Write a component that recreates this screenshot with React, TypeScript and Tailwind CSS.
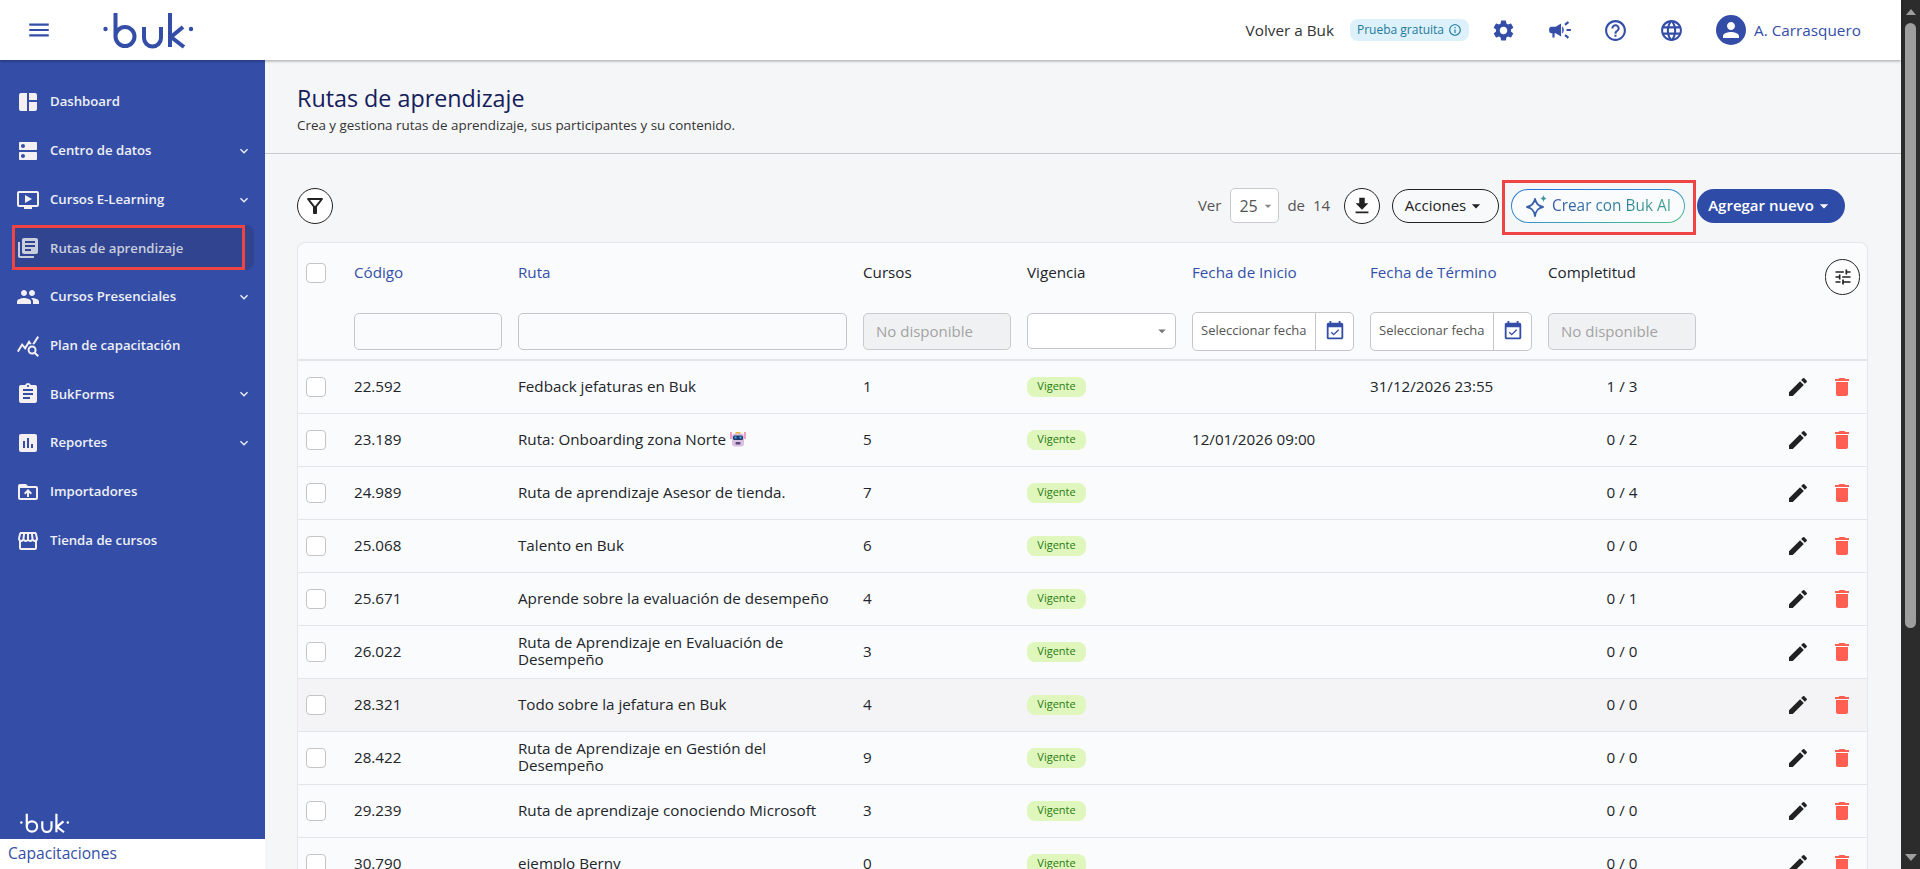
// App.tsx
import {
  MdArrowDropDown,
  MdAssessment,
  MdAssignment,
  MdCampaign,
  MdDelete,
  MdDns,
  MdEdit,
  MdEventAvailable,
  MdFileDownload,
  MdHelpOutline,
  MdInfoOutline,
  MdKeyboardArrowDown,
  MdLanguage,
  MdLibraryBooks,
  MdMenu,
  MdOndemandVideo,
  MdOutlineFilterAlt,
  MdPeople,
  MdPerson,
  MdQueryStats,
  MdSettings,
  MdSpaceDashboard,
  MdStorefront,
  MdTune,
  MdDriveFolderUpload,
} from 'react-icons/md';

const NAV = [
  { label: 'Dashboard', icon: MdSpaceDashboard },
  { label: 'Centro de datos', icon: MdDns, arrow: true },
  { label: 'Cursos E-Learning', icon: MdOndemandVideo, arrow: true },
  { label: 'Rutas de aprendizaje', icon: MdLibraryBooks, active: true },
  { label: 'Cursos Presenciales', icon: MdPeople, arrow: true },
  { label: 'Plan de capacitación', icon: MdQueryStats },
  { label: 'BukForms', icon: MdAssignment, arrow: true },
  { label: 'Reportes', icon: MdAssessment, arrow: true },
  { label: 'Importadores', icon: MdDriveFolderUpload },
  { label: 'Tienda de cursos', icon: MdStorefront },
];

const ROWS = [
  { code: '22.592', name: 'Fedback jefaturas en Buk', courses: '1', end: '31/12/2026 23:55', done: '1 / 3' },
  { code: '23.189', name: 'Ruta: Onboarding zona Norte', robot: true, courses: '5', start: '12/01/2026 09:00', done: '0 / 2' },
  { code: '24.989', name: 'Ruta de aprendizaje Asesor de tienda.', courses: '7', done: '0 / 4' },
  { code: '25.068', name: 'Talento en Buk', courses: '6', done: '0 / 0' },
  { code: '25.671', name: 'Aprende sobre la evaluación de desempeño', courses: '4', done: '0 / 1' },
  { code: '26.022', name: 'Ruta de Aprendizaje en Evaluación de Desempeño', courses: '3', done: '0 / 0' },
  { code: '28.321', name: 'Todo sobre la jefatura en Buk', courses: '4', done: '0 / 0', hover: true },
  { code: '28.422', name: 'Ruta de Aprendizaje en Gestión del Desempeño', courses: '9', done: '0 / 0' },
  { code: '29.239', name: 'Ruta de aprendizaje conociendo Microsoft', courses: '3', done: '0 / 0' },
  { code: '30.790', name: 'ejemplo Berny', courses: '0', done: '0 / 0' },
];

function BukLogo({ className }: { className: string }) {
  return (
    <svg viewBox="0 0 92 40" fill="none" stroke="currentColor" strokeWidth="4" className={className}>
      <circle cx="2.500" cy="19" r="2.200" fill="currentColor" stroke="none" />
      <path d="M12.500 3V26.500a9.500 9.500 0 1 0 9.500-9.500 9.500 9.500 0 0 0-9.500 9.500" />
      <path d="M41 17v11a8.500 8.500 0 0 0 17 0V17" />
      <path d="M67 3V37M80 17L68 27L81 37" />
      <circle cx="88" cy="19" r="2.200" fill="currentColor" stroke="none" />
    </svg>
  );
}

function Robot() {
  return (
    <svg viewBox="0 0 16 16" className="inline-block w-[16px] h-[16px] ml-1 align-[-2px]">
      <path d="M1 1v7M15 1v7" stroke="#e0457b" strokeWidth="1" />
      <rect x="5.500" y="1" width="5" height="2" fill="#f0b93a" />
      <rect x="2" y="2.500" width="12" height="13" rx="3" fill="#d9bfe0" />
      <rect x="3" y="4.500" width="10" height="4.500" rx="1.500" fill="#1e3a6e" />
      <rect x="4.500" y="5.500" width="2" height="2" fill="#4aa8e8" />
      <rect x="9.500" y="5.500" width="2" height="2" fill="#4aa8e8" />
      <rect x="5.500" y="11" width="5" height="2.500" rx="1" fill="#5a4a78" />
    </svg>
  );
}

function Sparkle() {
  return (
    <svg viewBox="0 0 24 24" className="w-[24px] h-[24px] shrink-0">
      <path
        d="M10 5c.9 4.500 2.800 6.800 8 8-5.200 1.200-7.100 3.500-8 9-.9-5.500-2.800-7.800-8-9 5.200-1.200 7.100-3.500 8-8z"
        fill="none"
        stroke="#3560a8"
        strokeWidth="1.800"
        strokeLinejoin="round"
      />
      <path d="M18.500 1c.3 2 1.200 3 3.200 3.600-2 .6-2.900 1.600-3.200 3.600-.3-2-1.200-3-3.200-3.600 2-.6 2.900-1.600 3.200-3.600z" fill="#3f93a0" />
    </svg>
  );
}

function Checkbox() {
  return <span className="block w-[20px] h-[20px] rounded-[4px] border border-[#c4c4c4] bg-white ml-2" />;
}

function DateFilter() {
  return (
    <div className="flex h-[39px] rounded-[5px] border border-[#c4c6ca] bg-white overflow-hidden">
      <input
        readOnly
        placeholder="Seleccionar fecha"
        className="w-[122px] min-w-0 pl-2 pr-2 text-[13px] outline-none placeholder:text-[#555]"
      />
      <span className="flex-1 flex items-center justify-center border-l border-[#c4c6ca]">
        <MdEventAvailable size={22} className="text-[#344ea8]" />
      </span>
    </div>
  );
}

function Disabled() {
  return (
    <input
      disabled
      placeholder="No disponible"
      className="w-full h-[37px] px-3 rounded-[5px] border border-[#c9cacd] bg-[#f0f1f3] text-[15px] placeholder:text-[#a3a3a3]"
    />
  );
}

export default function App() {
  return (
    <div className="flex w-full h-[869px] overflow-hidden text-[#212529] font-['Open_Sans','Lato',sans-serif]">
      <div className="flex flex-col w-[1901px] shrink-0 min-w-0">
        <header className="relative z-10 flex items-center h-[60px] shrink-0 bg-white shadow-[0_1px_3px_rgba(0,0,0,0.35)]">
          <MdMenu size={26} className="ml-[26px] text-[#344ea8]" />
          <BukLogo className="ml-[51px] w-[92px] h-[40px] text-[#344ea8]" />
          <div className="ml-auto flex items-center pr-[41px]">
            <span className="text-[15.300px] text-[#333]">Volver a Buk</span>
            <span className="ml-4 flex items-center justify-center gap-1 w-[119px] h-[22px] rounded-[8px] bg-[#dcf1f9] text-[12px] text-[#1f7a9c]">
              Prueba gratuita
              <MdInfoOutline size={14} />
            </span>
            <MdSettings size={25} className="ml-[22px] text-[#344ea8]" />
            <MdCampaign size={26} className="ml-[31px] text-[#344ea8]" />
            <MdHelpOutline size={25} className="ml-[30px] text-[#344ea8]" />
            <MdLanguage size={25} className="ml-[31px] text-[#344ea8]" />
            <span className="ml-[32px] flex items-center justify-center w-[30px] h-[30px] rounded-full bg-[#344ea8]">
              <MdPerson size={24} className="text-white" />
            </span>
            <span className="ml-2 w-[106px] text-[15.300px] whitespace-nowrap text-[#344ea8]">A. Carrasquero</span>
          </div>
        </header>

        <div className="flex flex-1 min-h-0">
          <aside className="flex flex-col w-[265px] shrink-0">
            <div className="flex flex-col flex-1 bg-[#344ea8] pt-[18px]">
              <nav className="flex flex-col">
                {NAV.map((item) => {
                  const Icon = item.icon;
                  return (
                    <div key={item.label} className="relative mx-[12px] h-[48.7px] flex items-center">
                      {item.active && (
                        <>
                          <span className="absolute left-0 right-[-1px] top-[1px] h-[45px] rounded-[8px] bg-[#30448f]" />
                          <span className="absolute left-0 top-[1px] w-[233px] h-[45px] border-[3px] border-[#ef4444]" />
                        </>
                      )}
                      <Icon size={24} className={`relative ml-[4px] shrink-0 ${item.active ? 'text-[#c9cede]' : 'text-[#f3eff2]'}`} />
                      <span
                        className={`relative ml-[10px] text-[13.200px] font-semibold ${
                          item.active ? 'text-[#c9cede]' : 'text-[#eef0f6]'
                        }`}
                      >
                        {item.label}
                      </span>
                      {item.arrow && <MdKeyboardArrowDown size={16} className="ml-auto mr-[1px] text-[#eef0f6]" />}
                    </div>
                  );
                })}
              </nav>
              <BukLogo className="mt-auto mb-[5px] ml-[20px] w-[50px] h-[22px] text-white" />
            </div>
            <div className="h-[30px] shrink-0 bg-white pl-2 flex items-center text-[15.600px] text-[#344ea8]">
              Capacitaciones
            </div>
          </aside>

          <main className="flex-1 min-w-0 bg-[#f5f6f8]">
            <div className="h-[94px] border-b border-[#c9cbcf] pl-[32px] pt-[23px]">
              <h1 className="text-[23.300px] leading-[30px] font-medium text-[#14205a]">Rutas de aprendizaje</h1>
              <p className="mt-[3px] text-[13.400px] leading-[18px] text-[#333]">
                Crea y gestiona rutas de aprendizaje, sus participantes y su contenido.
              </p>
            </div>

            <div className="flex items-center h-[35px] mt-[34px] pl-[32px] pr-[56px]">
              <button className="flex items-center justify-center w-[36px] h-[36px] rounded-full border border-[#222] bg-white">
                <MdOutlineFilterAlt size={24} className="text-[#222]" />
              </button>
              <span className="ml-auto text-[15px] text-[#555]">Ver</span>
              <span className="ml-[9px] flex items-center justify-between w-[49px] h-[35px] pl-2 pr-[2px] rounded-[5px] border border-[#c9cacd] bg-white text-[16px] text-[#555]">
                25
                <MdArrowDropDown size={16} className="text-[#888]" />
              </span>
              <span className="ml-[8px] text-[15px] text-[#555]">de</span>
              <span className="ml-[8px] w-[20px] text-[15px] text-[#555]">14</span>
              <button className="ml-[11px] flex items-center justify-center w-[36px] h-[36px] rounded-full border border-[#222] bg-white">
                <MdFileDownload size={22} className="text-[#222]" />
              </button>
              <button className="ml-[12px] flex items-center justify-center w-[107px] h-[34px] rounded-full border border-[#222] bg-[#f8f9fb] text-[15px] text-[#222]">
                Acciones
                <MdArrowDropDown size={20} />
              </button>
              <div className="relative ml-[12px]">
                <span className="absolute left-[-9px] right-[-11px] top-[-9px] bottom-[-12px] border-[3px] border-[#ef4444]" />
                <div className="relative w-[174px] h-[34px] rounded-full p-px bg-gradient-to-br from-[#1f6fe0] via-[#3a8fd0] to-[#4cc07f]">
                  <div className="flex items-center justify-center gap-[3px] w-full h-full rounded-full bg-[#fafbfd] text-[15.400px]">
                    <Sparkle />
                    <span className="bg-gradient-to-r from-[#3156a8] to-[#3fa28c] bg-clip-text text-transparent whitespace-nowrap">
                      Crear con Buk AI
                    </span>
                  </div>
                </div>
              </div>
              <button className="ml-[12px] flex items-center justify-center w-[148px] h-[34px] rounded-full bg-[#2f4ba8] text-[15px] font-semibold text-white whitespace-nowrap">
                Agregar nuevo
                <MdArrowDropDown size={20} />
              </button>
            </div>

            <div className="mt-[19px] ml-[32px] mr-[33px] rounded-t-[8px] border border-b-0 border-[#e6e7ea] bg-[#fafbfd]">
              <div className="grid grid-cols-[40px_148px_329px_148px_149px_162px_162px_148px_1fr] gap-x-4 grid-rows-[60px_56px] items-center border-b-2 border-[#e4e5e8] text-[15.200px]">
                <Checkbox />
                <span className="pb-[2px] text-[#3450a8]">Código</span>
                <span className="pb-[2px] text-[#3450a8]">Ruta</span>
                <span className="pb-[2px] font-medium">Cursos</span>
                <span className="pb-[2px] font-medium">Vigencia</span>
                <span className="pb-[2px] text-[#3450a8]">Fecha de Inicio</span>
                <span className="pb-[2px] text-[#3450a8]">Fecha de Término</span>
                <span className="pb-[2px] font-medium">Completitud</span>
                <span className="flex justify-end pr-[7px] pt-2">
                  <button className="flex items-center justify-center w-[35px] h-[36px] rounded-full border border-[#222] bg-white">
                    <MdTune size={20} className="text-[#222]" />
                  </button>
                </span>

                <span />
                <input className="w-full h-[37px] rounded-[5px] border border-[#c4c6ca] bg-[#fafbfd]" />
                <input className="w-full h-[37px] rounded-[5px] border border-[#c4c6ca] bg-[#fafbfd]" />
                <Disabled />
                <span className="relative flex items-center justify-end w-full h-[36px] pr-1 rounded-[5px] border border-[#c4c6ca] bg-white">
                  <MdArrowDropDown size={18} className="text-[#777]" />
                </span>
                <DateFilter />
                <DateFilter />
                <Disabled />
                <span />
              </div>

              {ROWS.map((row) => (
                <div
                  key={row.code}
                  className={`grid grid-cols-[40px_148px_329px_148px_149px_162px_162px_148px_1fr] gap-x-4 items-center h-[53px] border-b-[1px] border-[#e4e5e8] text-[15.200px] ${
                    row.hover ? 'bg-[#f4f4f6]' : ''
                  }`}
                >
                  <Checkbox />
                  <span className="pb-[2px]">{row.code}</span>
                  <span className="pb-[2px] leading-[17px]">
                    {row.name}
                    {row.robot && <Robot />}
                  </span>
                  <span className="pb-[2px]">{row.courses}</span>
                  <span>
                    <span className="flex items-center justify-center w-[59px] h-[20px] mb-[1px] rounded-[8px] bg-[#dff7bd] text-[11px] text-[#2a7a10]">
                      Vigente
                    </span>
                  </span>
                  <span className="pb-[2px]">{row.start}</span>
                  <span className="pb-[2px]">{row.end}</span>
                  <span className="pb-[2px] text-center">{row.done}</span>
                  <span className="flex justify-end items-center gap-[20px] pr-[13px]">
                    <MdEdit size={24} className="text-[#222]" />
                    <MdDelete size={24} className="text-[#ff5f52]" />
                  </span>
                </div>
              ))}
            </div>
          </main>
        </div>
      </div>

      {/* scrollbar of the captured window */}
      <div className="relative w-[19px] shrink-0 bg-[#2c2c2c]">
        <span className="absolute left-[5px] top-[9px] w-0 h-0 border-x-[5px] border-x-transparent border-b-[6px] border-b-[#9e9e9e]" />
        <span className="absolute left-[4px] top-[23px] w-[11px] h-[605px] rounded-full bg-[#9e9e9e]" />
        <span className="absolute left-[4px] bottom-[8px] w-0 h-0 border-x-[6px] border-x-transparent border-t-[7px] border-t-[#9e9e9e]" />
      </div>
    </div>
  );
}
